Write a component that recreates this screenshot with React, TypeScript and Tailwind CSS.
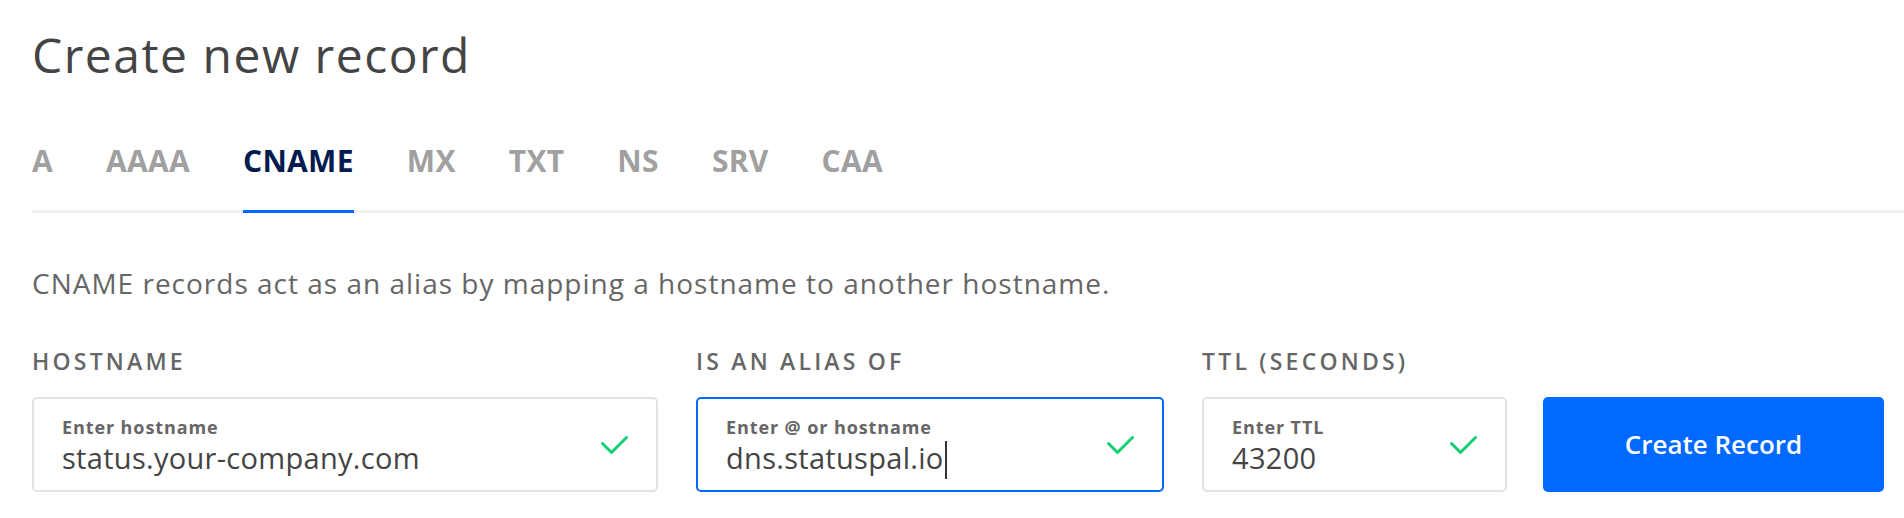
import { useState } from "react";

const RECORD_TYPES = ["A", "AAAA", "CNAME", "MX", "TXT", "NS", "SRV", "CAA"] as const;

function Check() {
  return (
    <svg width="27" height="20" viewBox="0 0 27 20" fill="none" className="shrink-0">
      <polyline
        points="1.5,8.5 10.5,17.5 25.5,2.5"
        stroke="#15cd72"
        strokeWidth="3"
        strokeLinecap="round"
        strokeLinejoin="round"
      />
    </svg>
  );
}

type FieldProps = {
  label: string;
  hint: string;
  value: string;
  width: string;
  focused?: boolean;
};

function Field({ label, hint, value, width, focused }: FieldProps) {
  return (
    <div className={`flex flex-col ${width}`}>
      <label className="text-[23px] leading-[23px] font-semibold tracking-[3.2px] text-[#666]">
        {label}
      </label>
      <div
        className={`mt-[24px] h-[95px] rounded-[5px] border-2 bg-white pl-[28px] pr-[28px] flex items-center justify-between ${
          focused ? "border-[#0069ff]" : "border-[#e3e3e3]"
        }`}
      >
        <div className="flex flex-col">
          <span className="text-[18px] leading-[18px] font-bold tracking-[0.9px] text-[#666]">{hint}</span>
          <div className="mt-[7px] h-[29px] flex items-center">
            <span className="text-[29px] leading-[29px] tracking-[0.3px] text-[#444]">{value}</span>
            {focused && <span className="ml-[1px] w-[2px] h-[38px] bg-[#333] translate-y-[3px]" />}
          </div>
        </div>
        <Check />
      </div>
    </div>
  );
}

export default function App() {
  const [active, setActive] = useState<string>("CNAME");

  return (
    <div className="min-h-screen bg-white pl-8 pt-[31px] font-['Open_Sans',sans-serif]">
      {/* ── Title ───────────────────────── */}
      <h1 className="text-[48px] leading-[48px] font-normal tracking-[1.5px] text-[#444]">Create new record</h1>

      {/* ── Record type tabs ────────────── */}
      <ul className="mt-[67px] flex gap-[53px] border-b-[3px] border-[#eef0f1]">
        {RECORD_TYPES.map((type) => (
          <li
            key={type}
            onClick={() => setActive(type)}
            className={`-mb-[3px] pb-[34px] border-b-[3px] cursor-pointer text-[30px] leading-[30px] font-bold tracking-[0.3px] ${
              active === type ? "border-[#0069ff] text-[#031b4e]" : "border-transparent text-[#a0a0a0]"
            }`}
          >
            {type}
          </li>
        ))}
      </ul>

      <p className="mt-[56px] text-[28px] leading-[28px] tracking-[1px] text-[#666]">
        CNAME records act as an alias by mapping a hostname to another hostname.
      </p>

      {/* ── Form row ────────────────────── */}
      <div className="mt-[53px] flex items-end">
        <Field label="HOSTNAME" hint="Enter hostname" value="status.your-company.com" width="w-[626px]" />
        <Field
          label="IS AN ALIAS OF"
          hint="Enter @ or hostname"
          value="dns.statuspal.io"
          width="ml-[38px] w-[468px]"
          focused
        />
        <Field label="TTL (SECONDS)" hint="Enter TTL" value="43200" width="ml-[38px] w-[305px]" />
        <button className="ml-[36px] w-[341px] h-[95px] rounded-[5px] bg-[#0069ff] text-white text-[26px] font-semibold">
          Create Record
        </button>
      </div>
    </div>
  );
}
